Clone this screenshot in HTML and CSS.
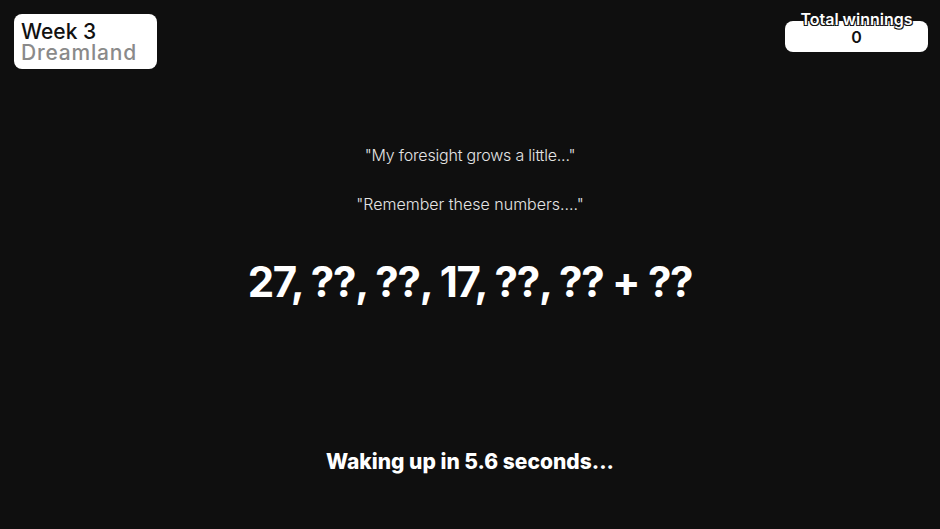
FILE: index.html
```html
<!DOCTYPE html>
<html lang="en">
<head>
    <meta charset="UTF-8">
    <meta name="viewport" content="width=device-width, initial-scale=1.0">
    <title>Dreamland</title>
    <link rel="stylesheet" href="styles.css">
</head>
<body>

<div class="screen">
    <div class="topbar">
        <div class="week-card">
            <div class="week">Week 3</div>
            <div class="place">Dreamland</div>
        </div>
        <div class="winnings">
            <div class="winnings-label">Total winnings</div>
            <div class="winnings-box">0</div>
        </div>
    </div>

    <div class="dream">
        <p class="line">"My foresight grows a little..."</p>
        <p class="line">"Remember these numbers...."</p>
        <div class="numbers">27, ??, ??, 17, ??, ?? + ??</div>
    </div>

    <div class="wake">Waking up in 5.6 seconds...</div>
</div>

</body>
</html>
```

FILE: styles.css
```css
body {
    margin: 0;
    padding: 0;
    background-color: #0f0f0f;
    font-family: Inter, "Open Sans", sans-serif;
    color: #fff;
}
.screen {
    width: 940px;
    height: 529px;
    display: flex;
    flex-direction: column;
    overflow: hidden;
}
.topbar {
    display: flex;
    justify-content: space-between;
    align-items: flex-start;
    padding: 14px 12px 0 14px;
}
.week-card {
    width: 143px;
    height: 55px;
    box-sizing: border-box;
    padding: 7px 7px 0;
    background-color: #fff;
    border-radius: 8px;
    line-height: 21px;
    font-size: 21px;
    font-weight: 500;
}
.week {
    color: #111;
}
.place {
    color: #8a8a8a;
    letter-spacing: 0.8px;
}
.winnings {
    width: 143px;
    position: relative;
    padding-top: 7px;
}
.winnings-box {
    height: 31px;
    background-color: #fff;
    border-radius: 8px;
    color: #111;
    font-size: 16px;
    font-weight: 600;
    text-align: center;
    line-height: 32px;
}
.winnings-label {
    position: absolute;
    top: -5px;
    left: 0;
    right: 0;
    text-align: center;
    font-size: 16px;
    font-weight: 600;
    color: #fff;
    text-shadow: -1px -1px 0 #111, 1px -1px 0 #111, -1px 1px 0 #111, 1px 1px 0 #111;
}
.dream {
    text-align: center;
    padding-top: 77px;
}
.line {
    margin: 0 0 30px;
    font-size: 16px;
    font-weight: 300;
    line-height: 19px;
    color: #e4e4e4;
}
.line:first-child {
    letter-spacing: -0.2px;
}
.numbers {
    margin-top: 42px;
    font-size: 42px;
    font-weight: 700;
    letter-spacing: -1.3px;
    line-height: 52px;
}
.wake {
    margin-top: 140px;
    text-align: center;
    font-size: 21px;
    font-weight: 800;
    line-height: 28px;
}
```
